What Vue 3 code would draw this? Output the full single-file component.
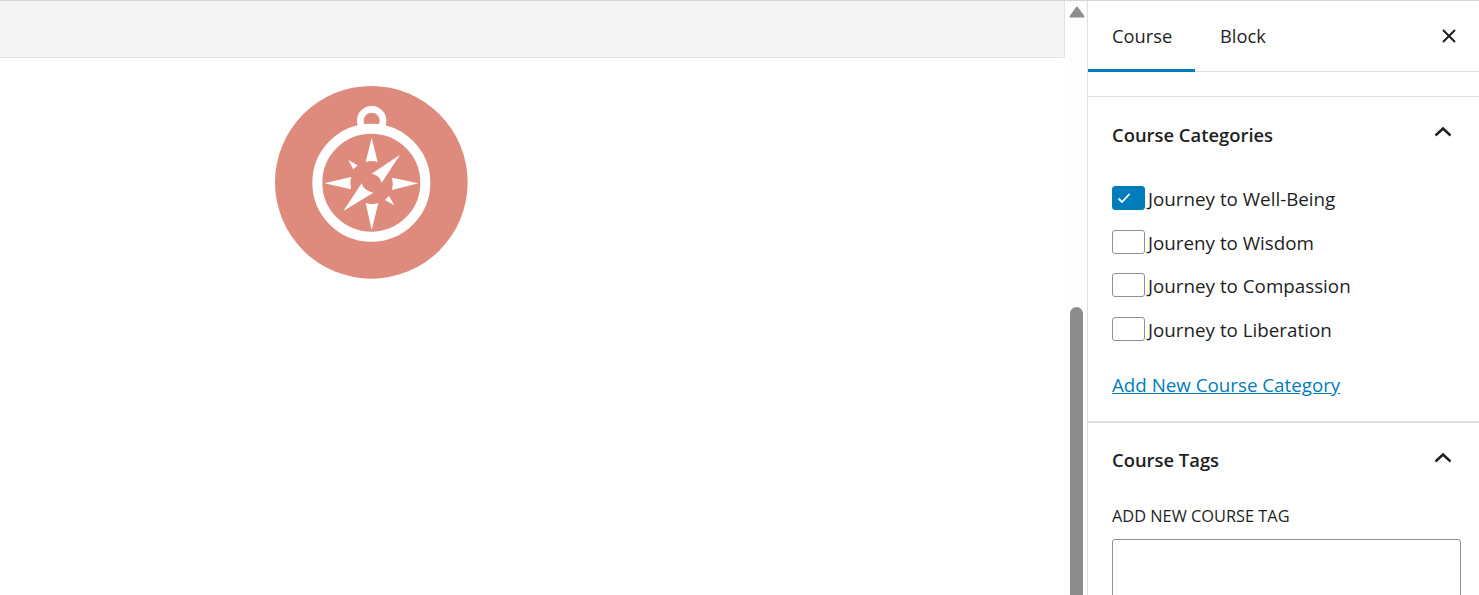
<script setup>
const cats = [
  { label: 'Journey to Well-Being', checked: true },
  { label: 'Joureny to Wisdom', checked: false },
  { label: 'Journey to Compassion', checked: false },
  { label: 'Journey to Liberation', checked: false },
]
</script>

<template>
  <div class="page">
    <main class="canvas">
      <div class="band"></div>
      <div class="logo-row">
        <svg class="logo" viewBox="0 0 640 640" width="213.33" height="213.33">
          <circle cx="319" cy="319" r="289" fill="#de8b7d" />
          <circle cx="320" cy="134" r="34" fill="none" stroke="#fff" stroke-width="20" />
          <circle cx="319" cy="320" r="162" fill="#de8b7d" stroke="#fff" stroke-width="30" />
          <g fill="#fff">
            <path d="M320 185 L338 258 Q320 252 302 258 Z" />
            <path d="M460 322 L381 342 Q386 323 381 305 Z" />
            <path d="M320 462 L302 381 Q320 388 340 381 Z" />
            <path d="M178 322 L258 303 Q254 322 258 340 Z" />
            <path d="M405 236 L350 320 Q345 298 320 293 Z" />
            <path d="M235 405 L290 322 Q296 344 325 350 Z" />
            <path d="M250 252 L278 268 L265 280 Z" />
            <path d="M388 388 L360 372 L372 360 Z" />
          </g>
        </svg>
      </div>
    </main>

    <div class="scrollbar">
      <svg class="arrow" viewBox="0 0 16 12" width="16" height="12"><path d="M8 1.5 L14.5 10.5 L1.5 10.5 Z" fill="#8c8c8c" stroke="#8c8c8c" stroke-width="2" stroke-linejoin="round" /></svg>
      <div class="thumb"></div>
    </div>

    <aside class="sidebar">
      <div class="tabs">
        <div class="tab active">Course</div>
        <div class="tab">Block</div>
        <svg class="close" viewBox="0 0 16 16" width="16" height="16">
          <path d="M2 2 L14 14 M14 2 L2 14" stroke="#1e1e1e" stroke-width="2" fill="none" />
        </svg>
      </div>
      <div class="spacer"></div>

      <section class="panel first">
        <header class="panel-head">
          <h2>Course Categories</h2>
          <svg class="chev" viewBox="0 0 18 11" width="18" height="11"><path d="M1.5 9.5 L9 2.5 L16.5 9.5" stroke="#1e1e1e" stroke-width="2.4" fill="none" /></svg>
        </header>
        <ul class="list">
          <li v-for="c in cats" :key="c.label" class="item">
            <span class="box" :class="{ on: c.checked }">
              <svg v-if="c.checked" viewBox="0 0 14 12" width="14" height="12"><path d="M1.5 6.5 L5 10 L12.5 2" stroke="#fff" stroke-width="1.8" fill="none" /></svg>
            </span>
            <span class="item-label">{{ c.label }}</span>
          </li>
        </ul>
        <a class="add" href="#" @click.prevent>Add New Course Category</a>
      </section>

      <section class="panel second">
        <header class="panel-head">
          <h2>Course Tags</h2>
          <svg class="chev" viewBox="0 0 18 11" width="18" height="11"><path d="M1.5 9.5 L9 2.5 L16.5 9.5" stroke="#1e1e1e" stroke-width="2.4" fill="none" /></svg>
        </header>
        <div class="tag-label">ADD NEW COURSE TAG</div>
        <div class="tag-input"></div>
      </section>
    </aside>
  </div>
</template>

<style>
html, body { margin: 0; overflow: hidden; background: #fff; }
</style>

<style scoped>
.page {
  display: flex;
  width: 1479px;
  height: 595px;
  overflow: hidden;
  font-family: "Open Sans", "Noto Sans", sans-serif;
  color: #1e1e1e;
  background: #fff;
  box-sizing: border-box;
  border-top: 1px solid #d6d6d6;
}
.canvas { width: 1065px; flex: none; }
.band {
  height: 56px;
  background: #f4f4f4;
  border-bottom: 1px solid #e2e2e2;
  border-right: 1px solid #e2e2e2;
  border-bottom-right-radius: 2px;
}
.logo-row { padding: 18px 0 0 265px; }
.logo { display: block; }
.scrollbar {
  width: 23px;
  flex: none;
  background: #fdfdfd;
  box-sizing: border-box;
  padding: 5px 0 0 4px;
  border-right: 1px solid #e0e0e0;
}
.arrow { display: block; }
.thumb {
  width: 13px;
  height: 300px;
  margin: 289px 0 0 1px;
  border-radius: 7px 7px 0 0;
  background: #8c8c8c;
}
.sidebar { flex: 1; min-width: 0; }
.tabs {
  display: flex;
  align-items: center;
  height: 70px;
  border-bottom: 1px solid #dedede;
}
.tab {
  font-size: 18.3px;
  line-height: 70px;
  height: 70px;
  padding: 0 24px;
  box-sizing: border-box;
}
.tab.active {
  width: 107px;
  padding-right: 0;
  box-shadow: inset 0 -3px 0 #007cba;
  margin-right: 1px;
  margin-bottom: -1px;
  height: 71px;
}
.close { margin-left: auto; margin-right: 22px; }
.spacer { height: 24px; border-bottom: 1px solid #dedede; }
.panel { padding: 0 18px 0 24px; }
.panel.first { height: 324px; border-bottom: 2px solid #e0e0e0; }
.panel-head {
  display: flex;
  justify-content: space-between;
  align-items: center;
  height: 74px;
}
.panel.second .panel-head { height: 73px; }
.panel-head h2 { margin: 0; font-size: 18.4px; font-weight: 600; }
.chev { margin-right: 9px; margin-top: -5px; }
.list {
  list-style: none;
  margin: 0;
  padding: 15px 0 0;
  display: flex;
  flex-direction: column;
  gap: 19.6px;
}
.item {
  display: flex;
  align-items: center;
  height: 24px;
  font-size: 18.8px;
}
.item-label { position: relative; top: 1px; }
.box {
  width: 33px;
  height: 24px;
  box-sizing: border-box;
  margin-right: 3px;
  border: 1px solid #8c8f94;
  border-radius: 3px;
  background: #fff;
  display: flex;
  align-items: center;
  justify-content: center;
  flex: none;
}
.box.on { background: #007cba; border-color: #007cba; padding-right: 9px; }
.add {
  display: block;
  margin-top: 31px;
  font-size: 18.75px;
  color: #007cba;
  text-decoration: underline;
}
.tag-label {
  font-size: 16.35px;
  font-weight: 500;
  margin-top: 10px;
  line-height: 20px;
}
.tag-input {
  margin-top: 13px;
  height: 80px;
  border: 1px solid #8c8f94;
  border-radius: 3px;
}
</style>
